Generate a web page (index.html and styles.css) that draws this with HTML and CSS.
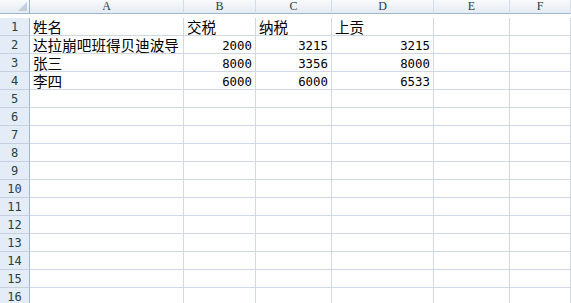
FILE: index.html
```html
<!DOCTYPE html>
<html lang="zh-CN">
<head>
    <meta charset="UTF-8">
    <title>Sheet1</title>
    <link rel="stylesheet" href="styles.css">
</head>
<body>
    <div class="sheet">
        <!-- cabeçalho das colunas -->
        <div class="corner"><span class="tri"></span></div>
        <div class="colhead">A</div>
        <div class="colhead">B</div>
        <div class="colhead">C</div>
        <div class="colhead">D</div>
        <div class="colhead">E</div>
        <div class="colhead">F</div>

        <div class="rowhead">1</div>
        <div class="cell">姓名</div>
        <div class="cell">交税</div>
        <div class="cell">纳税</div>
        <div class="cell">上贡</div>
        <div class="cell"></div>
        <div class="cell"></div>

        <div class="rowhead">2</div>
        <div class="cell">达拉崩吧班得贝迪波导</div>
        <div class="cell num">2000</div>
        <div class="cell num">3215</div>
        <div class="cell num">3215</div>
        <div class="cell"></div>
        <div class="cell"></div>

        <div class="rowhead">3</div>
        <div class="cell">张三</div>
        <div class="cell num">8000</div>
        <div class="cell num">3356</div>
        <div class="cell num">8000</div>
        <div class="cell"></div>
        <div class="cell"></div>

        <div class="rowhead">4</div>
        <div class="cell">李四</div>
        <div class="cell num">6000</div>
        <div class="cell num">6000</div>
        <div class="cell num">6533</div>
        <div class="cell"></div>
        <div class="cell"></div>
    </div>
    <div class="sheet" id="emptyRows"></div>

    <script>
        // linhas vazias 5..16
        const empty = document.getElementById('emptyRows');
        for (let r = 5; r <= 16; r++) {
            let html = '<div class="rowhead">' + r + '</div>';
            for (let c = 0; c < 6; c++) html += '<div class="cell"></div>';
            empty.insertAdjacentHTML('beforeend', html);
        }
    </script>
</body>
</html>
```

FILE: styles.css
```css
/* Planilha */
body {
    margin: 0;
    padding: 0;
    background: #ffffff;
    overflow: hidden;
    font-family: "Noto Sans CJK SC", "Liberation Serif", serif;
}

.sheet {
    display: grid;
    grid-template-columns: 30px 154px 72px 76px 102px 76px 61px;
    grid-auto-rows: 18px;
    width: 571px;
}

.sheet > div {
    box-sizing: border-box;
    border-right: 1px solid #d0d7e5;
    border-bottom: 1px solid #d0d7e5;
    white-space: nowrap;
}

/* Cabeçalhos */
.corner, .colhead {
    height: 14px;
    background: linear-gradient(#f8fafc, #e5ebf3);
}

.sheet > .corner {
    position: relative;
    border-right: 1px solid #9eb6ce;
    border-bottom: 1px solid #9eb6ce;
}

.tri {
    position: absolute;
    right: 2px;
    bottom: 2px;
    width: 0;
    height: 0;
    border-left: 9px solid transparent;
    border-bottom: 9px solid #c4cfdb;
}

.sheet > .colhead {
    border-right: 1px solid #d5dde7;
    border-bottom: 1px solid #9eb6ce;
    font-family: "Liberation Serif", serif;
    font-size: 12px;
    line-height: 13px;
    text-align: center;
    color: #27413e;
}

.sheet > .colhead:last-child {
    border-right: none;
}

.sheet > .rowhead {
    background: #e4ecf7;
    border-right: 1px solid #9eb6ce;
    border-bottom: 1px solid #c5d1e0;
    font-family: "DejaVu Sans Mono", monospace;
    font-size: 12px;
    line-height: 15px;
    padding-top: 2px;
    text-align: center;
    color: #27413e;
}

/* Células */
.cell {
    font-size: 14.6px;
    line-height: 17px;
    padding-left: 3px;
    color: #000;
}

.cell.num {
    font-family: "DejaVu Sans Mono", monospace;
    font-size: 12.4px;
    line-height: 19px;
    text-align: right;
    padding-right: 3px;
}
```
